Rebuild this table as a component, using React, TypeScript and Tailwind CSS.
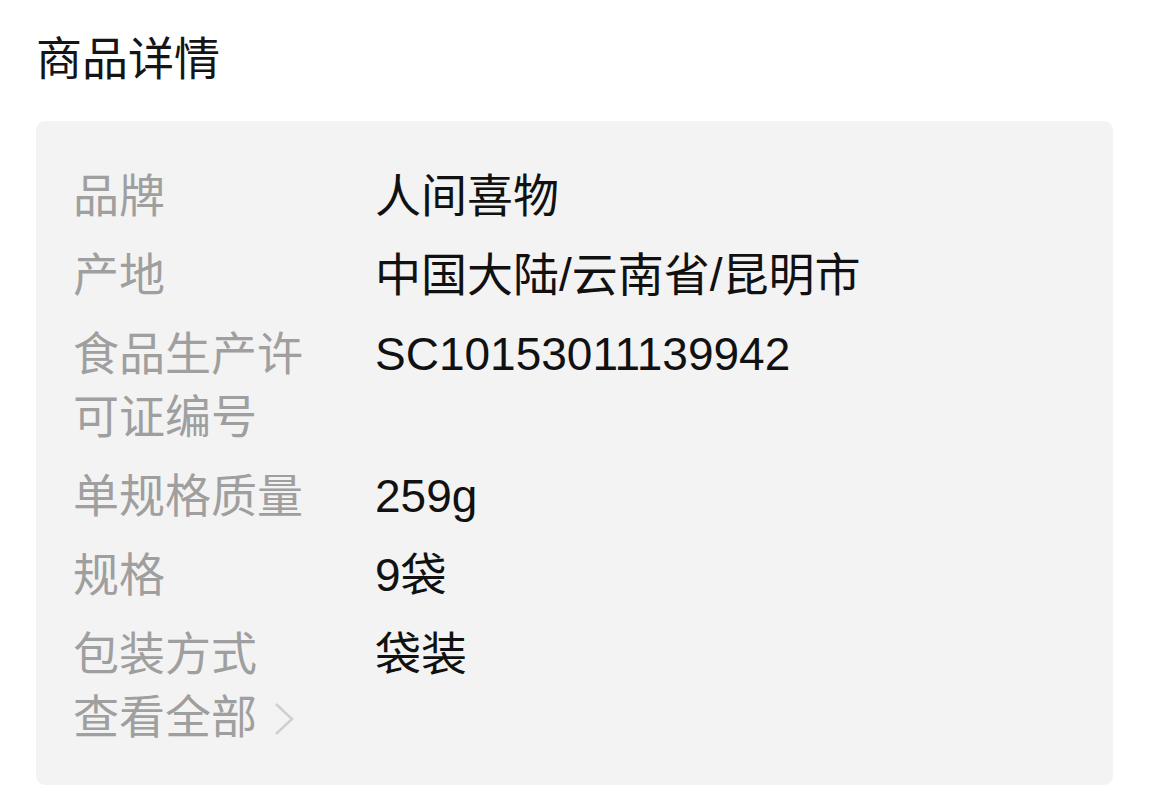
const ROWS = [
  { label: "品牌", value: "人间喜物" },
  { label: "产地", value: "中国大陆/云南省/昆明市" },
  { label: "食品生产许可证编号", value: "SC10153011139942" },
  { label: "单规格质量", value: "259g" },
  { label: "规格", value: "9袋" },
  { label: "包装方式", value: "袋装" },
];

export default function App() {
  return (
    <div
      className="min-h-[809px] bg-white px-[36px] pt-[28px] text-[46px] leading-[63px]"
      style={{ fontFamily: '"Liberation Sans", "Noto Sans CJK SC", sans-serif' }}
    >
      <h2 className="leading-[62px] text-[#151515]">商品详情</h2>

      <div className="mt-[31px] w-[1077px] rounded-[9px] bg-[#f3f3f3] pl-[37px] pr-8 pt-[44px] pb-[36px]">
        <div className="flex flex-col gap-[16px]">
          {ROWS.map((row) => (
            <div key={row.label} className="grid grid-cols-[302px_1fr]">
              <span className="max-w-[250px] text-[#9f9f9f]">{row.label}</span>
              <span className="text-[#111111]">{row.value}</span>
            </div>
          ))}
        </div>
        <div className="flex items-center text-[#9f9f9f]">
          <span>查看全部</span>
          <svg width="20" height="32" viewBox="0 0 20 32" className="ml-[17px] mt-[2px] shrink-0">
            <polyline points="2,1 18,16 2,31" fill="none" stroke="#cfcfcf" strokeWidth="2.5" />
          </svg>
        </div>
      </div>
    </div>
  );
}
